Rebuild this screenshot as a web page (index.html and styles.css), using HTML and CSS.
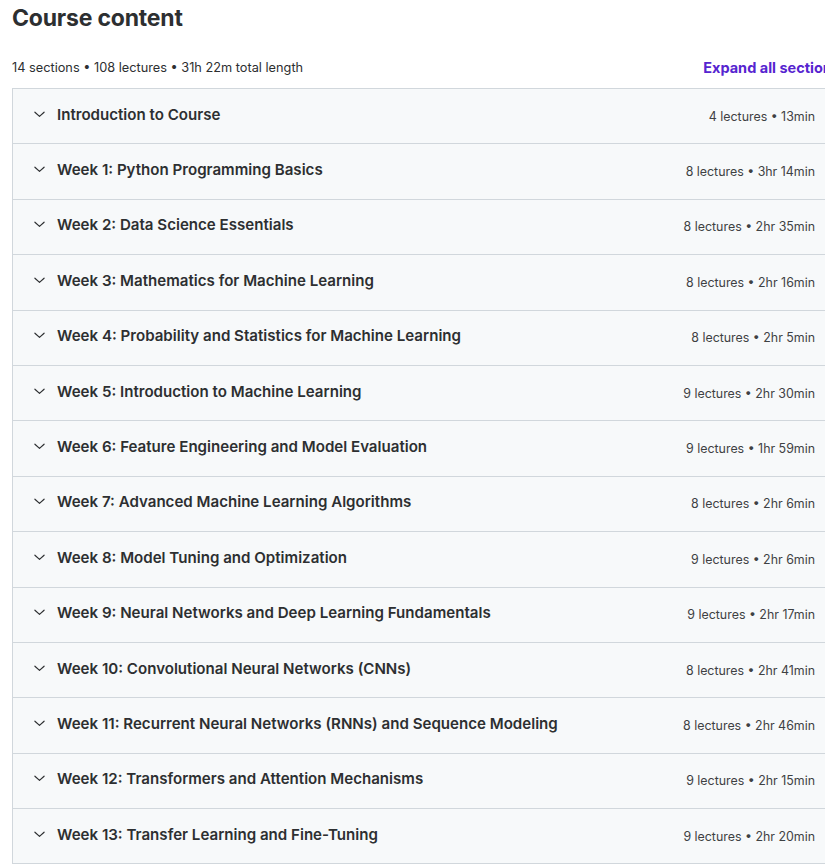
FILE: index.html
```html
<!DOCTYPE html>
<html>
<head>
<meta charset="utf-8">
<link rel="stylesheet" href="styles.css">
</head>
<body>
<div class="page">
  <h2 class="title">Course content</h2>
  <div class="summary">
    <span class="stats">14 sections • 108 lectures • 31h 22m total length</span>
    <span class="expand">Expand all sections</span>
  </div>
  <div class="sections">
    <div class="row"><span class="chev"><svg viewBox="0 0 12 7" width="11" height="7"><path d="M1 1l5 4.5 5-4.5" fill="none" stroke="#2d2f31" stroke-width="1.3" stroke-linecap="round" stroke-linejoin="round"/></svg></span><span class="name">Introduction to Course</span><span class="meta">4 lectures • 13min</span></div>
    <div class="row"><span class="chev"><svg viewBox="0 0 12 7" width="11" height="7"><path d="M1 1l5 4.5 5-4.5" fill="none" stroke="#2d2f31" stroke-width="1.3" stroke-linecap="round" stroke-linejoin="round"/></svg></span><span class="name">Week 1: Python Programming Basics</span><span class="meta">8 lectures • 3hr 14min</span></div>
    <div class="row"><span class="chev"><svg viewBox="0 0 12 7" width="11" height="7"><path d="M1 1l5 4.5 5-4.5" fill="none" stroke="#2d2f31" stroke-width="1.3" stroke-linecap="round" stroke-linejoin="round"/></svg></span><span class="name">Week 2: Data Science Essentials</span><span class="meta">8 lectures • 2hr 35min</span></div>
    <div class="row"><span class="chev"><svg viewBox="0 0 12 7" width="11" height="7"><path d="M1 1l5 4.5 5-4.5" fill="none" stroke="#2d2f31" stroke-width="1.3" stroke-linecap="round" stroke-linejoin="round"/></svg></span><span class="name">Week 3: Mathematics for Machine Learning</span><span class="meta">8 lectures • 2hr 16min</span></div>
    <div class="row"><span class="chev"><svg viewBox="0 0 12 7" width="11" height="7"><path d="M1 1l5 4.5 5-4.5" fill="none" stroke="#2d2f31" stroke-width="1.3" stroke-linecap="round" stroke-linejoin="round"/></svg></span><span class="name">Week 4: Probability and Statistics for Machine Learning</span><span class="meta">8 lectures • 2hr 5min</span></div>
    <div class="row"><span class="chev"><svg viewBox="0 0 12 7" width="11" height="7"><path d="M1 1l5 4.5 5-4.5" fill="none" stroke="#2d2f31" stroke-width="1.3" stroke-linecap="round" stroke-linejoin="round"/></svg></span><span class="name">Week 5: Introduction to Machine Learning</span><span class="meta">9 lectures • 2hr 30min</span></div>
    <div class="row"><span class="chev"><svg viewBox="0 0 12 7" width="11" height="7"><path d="M1 1l5 4.5 5-4.5" fill="none" stroke="#2d2f31" stroke-width="1.3" stroke-linecap="round" stroke-linejoin="round"/></svg></span><span class="name">Week 6: Feature Engineering and Model Evaluation</span><span class="meta">9 lectures • 1hr 59min</span></div>
    <div class="row"><span class="chev"><svg viewBox="0 0 12 7" width="11" height="7"><path d="M1 1l5 4.5 5-4.5" fill="none" stroke="#2d2f31" stroke-width="1.3" stroke-linecap="round" stroke-linejoin="round"/></svg></span><span class="name">Week 7: Advanced Machine Learning Algorithms</span><span class="meta">8 lectures • 2hr 6min</span></div>
    <div class="row"><span class="chev"><svg viewBox="0 0 12 7" width="11" height="7"><path d="M1 1l5 4.5 5-4.5" fill="none" stroke="#2d2f31" stroke-width="1.3" stroke-linecap="round" stroke-linejoin="round"/></svg></span><span class="name">Week 8: Model Tuning and Optimization</span><span class="meta">9 lectures • 2hr 6min</span></div>
    <div class="row"><span class="chev"><svg viewBox="0 0 12 7" width="11" height="7"><path d="M1 1l5 4.5 5-4.5" fill="none" stroke="#2d2f31" stroke-width="1.3" stroke-linecap="round" stroke-linejoin="round"/></svg></span><span class="name">Week 9: Neural Networks and Deep Learning Fundamentals</span><span class="meta">9 lectures • 2hr 17min</span></div>
    <div class="row"><span class="chev"><svg viewBox="0 0 12 7" width="11" height="7"><path d="M1 1l5 4.5 5-4.5" fill="none" stroke="#2d2f31" stroke-width="1.3" stroke-linecap="round" stroke-linejoin="round"/></svg></span><span class="name">Week 10: Convolutional Neural Networks (CNNs)</span><span class="meta">8 lectures • 2hr 41min</span></div>
    <div class="row"><span class="chev"><svg viewBox="0 0 12 7" width="11" height="7"><path d="M1 1l5 4.5 5-4.5" fill="none" stroke="#2d2f31" stroke-width="1.3" stroke-linecap="round" stroke-linejoin="round"/></svg></span><span class="name">Week 11: Recurrent Neural Networks (RNNs) and Sequence Modeling</span><span class="meta">8 lectures • 2hr 46min</span></div>
    <div class="row"><span class="chev"><svg viewBox="0 0 12 7" width="11" height="7"><path d="M1 1l5 4.5 5-4.5" fill="none" stroke="#2d2f31" stroke-width="1.3" stroke-linecap="round" stroke-linejoin="round"/></svg></span><span class="name">Week 12: Transformers and Attention Mechanisms</span><span class="meta">9 lectures • 2hr 15min</span></div>
    <div class="row"><span class="chev"><svg viewBox="0 0 12 7" width="11" height="7"><path d="M1 1l5 4.5 5-4.5" fill="none" stroke="#2d2f31" stroke-width="1.3" stroke-linecap="round" stroke-linejoin="round"/></svg></span><span class="name">Week 13: Transfer Learning and Fine-Tuning</span><span class="meta">9 lectures • 2hr 20min</span></div>
  </div>
</div>
</body>
</html>
```
FILE: styles.css
```css
html, body {
  margin: 0;
  padding: 0;
  background: #ffffff;
  overflow: hidden;
}
body {
  font-family: Inter, "Noto Sans", sans-serif;
  color: #2d2f31;
}
.page {
  width: 828px;
  padding-left: 12px;
}
.title {
  margin: 0;
  padding-top: 4px;
  font-size: 23px;
  line-height: 28px;
  font-weight: 700;
  letter-spacing: -0.2px;
}
.summary {
  display: flex;
  justify-content: space-between;
  align-items: center;
  margin-top: 24px;
  height: 22px;
  margin-bottom: 10px;
  font-size: 12.75px;
}
.stats {
  color: #2d2f31;
}
.expand {
  color: #5624d0;
  font-weight: 700;
  font-size: 14.5px;
  white-space: nowrap;
}
.sections {
  border: 1px solid #d1d7dc;
  border-bottom: none;
}
.row {
  display: flex;
  align-items: center;
  height: 55.4px;
  box-sizing: border-box;
  border-bottom: 1px solid #d1d7dc;
  background: #f7f9fa;
  padding: 0 24px 0 21px;
}
.chev {
  display: flex;
  width: 11px;
  height: 7px;
  margin-right: 12px;
  margin-bottom: 4px;
}
.name {
  flex: 1;
  font-size: 15.1px;
  font-weight: 600;
  white-space: nowrap;
  margin-bottom: 4px;
}
.meta {
  font-size: 12.4px;
  color: #3e4143;
  white-space: nowrap;
}
```
